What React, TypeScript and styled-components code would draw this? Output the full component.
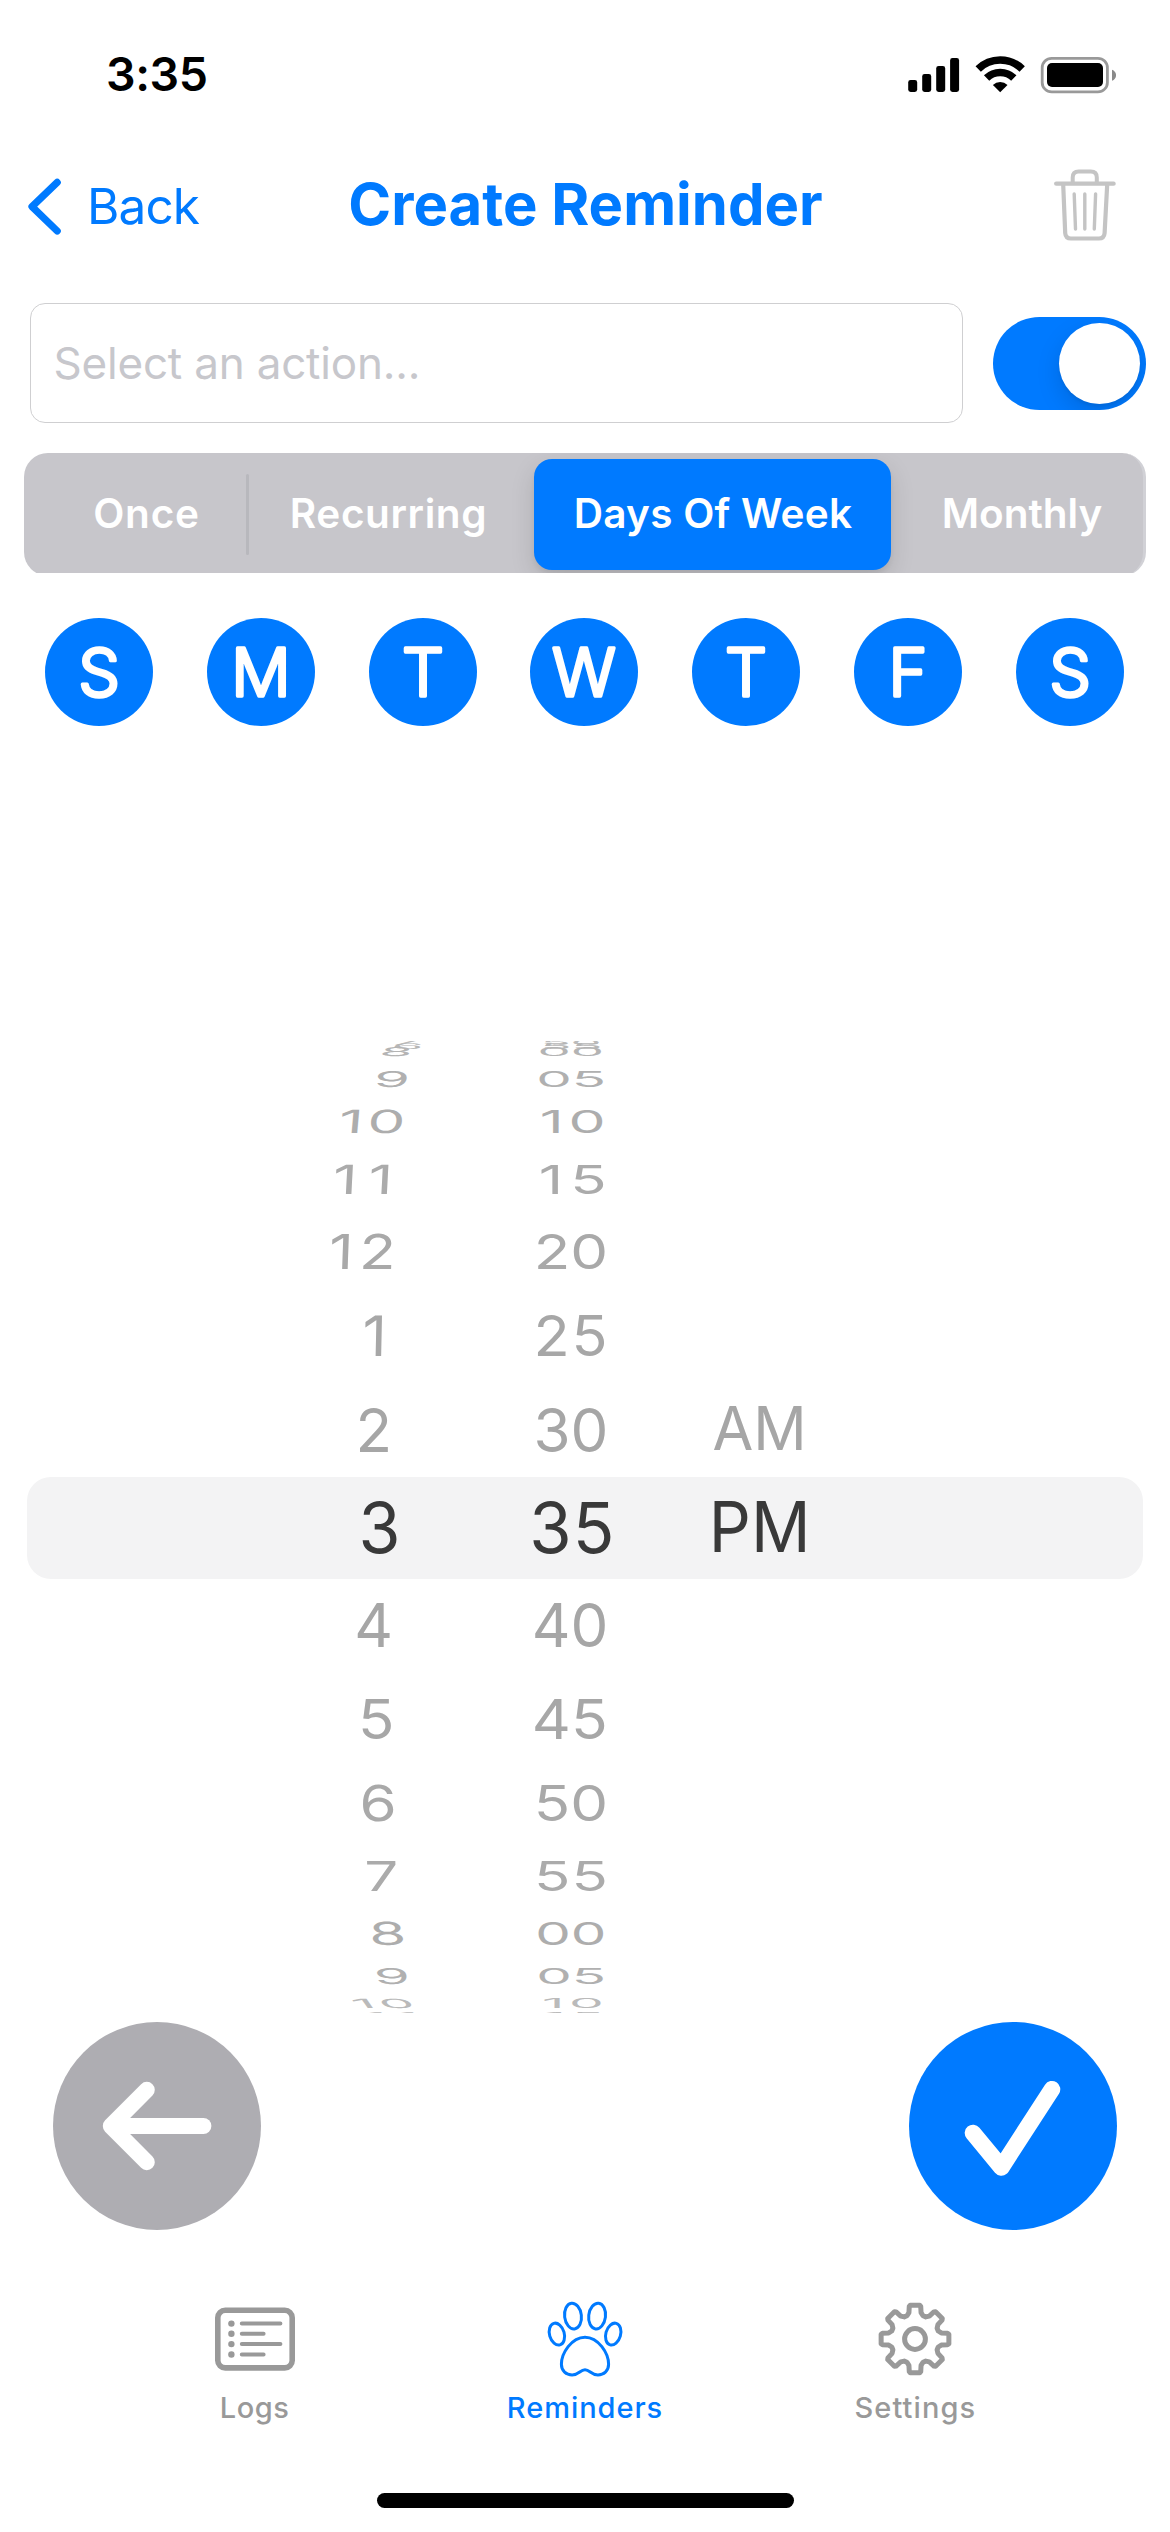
import React from "react";
import styled, { createGlobalStyle } from "styled-components";

const BLUE = "#007aff";
const TAB_GRAY = "#999999";

const GlobalStyle = createGlobalStyle`
  body { margin: 0; background: #ffffff; }
  * { box-sizing: border-box; }
`;

const Screen = styled.main`
  display: flex;
  flex-direction: column;
  width: 1170px;
  height: 2532px;
  overflow: hidden;
  background: #ffffff;
  font-family: Inter, "Liberation Sans", sans-serif;
`;

/* ---------- status bar ---------- */

const StatusBar = styled.header`
  display: flex;
  align-items: center;
  justify-content: space-between;
  height: 149px;
  padding: 0 54px 0 106px;
`;

const Clock = styled.time`
  font-size: 46.5px;
  font-weight: 600;
  line-height: 1;
  letter-spacing: -0.4px;
  color: #000000;
`;

const StatusIcons = styled.div`
  display: flex;
  align-items: center;
`;

const SignalIcon = () => (
  <svg width="209" height="40" viewBox="906 54 209 40">
    <rect x="907.2" y="79" width="9" height="12" rx="2.4" />
    <rect x="921.2" y="73" width="9" height="18" rx="2.4" />
    <rect x="935.2" y="65" width="9" height="26" rx="2.4" />
    <rect x="949.1" y="57" width="9" height="34" rx="2.4" />
    <g fill="none" stroke="#000000" strokeWidth="7.6">
      <path d="M977.2 68 A31.5 31.5 0 0 1 1021.2 68" />
      <path d="M985.6 77 A19.5 19.5 0 0 1 1012.8 77" />
    </g>
    <path d="M999.2 91.3 L991.9 83.9 A10.8 10.8 0 0 1 1006.5 83.9 Z" />
    <rect x="1041.2" y="57.3" width="65.2" height="33.6" rx="9.5" fill="none" stroke="#999999" strokeWidth="2.8" />
    <rect x="1046" y="62" width="56" height="24" rx="5" />
    <path d="M1111 68.7 C1116.4 70.4 1116.4 78 1111 79.7 Z" fill="#8a8a8a" />
  </svg>
);

/* ---------- navigation bar ---------- */

const NavBar = styled.nav`
  display: grid;
  grid-template-columns: 270px 550px 270px;
  align-items: center;
  height: 111px;
  padding: 0 53px 0 27px;
`;

const BackButton = styled.button`
  display: flex;
  align-items: center;
  gap: 24px;
  margin: 4px 0 0;
  padding: 0;
  border: 0;
  background: none;
  font-family: inherit;
  font-size: 49.5px;
  line-height: 1;
  letter-spacing: -0.9px;
  color: ${BLUE};
`;

const Title = styled.h1`
  margin: -2px 0 0 27px;
  font-size: 58px;
  font-weight: 700;
  line-height: 1;
  white-space: nowrap;
  text-align: center;
  color: ${BLUE};
`;

const TrashButton = styled.button`
  display: flex;
  justify-content: flex-end;
  padding: 0;
  border: 0;
  background: none;
`;

const ChevronIcon = () => (
  <svg width="36" height="60" viewBox="27 177 36 60" fill="none" stroke={BLUE} strokeWidth="7.2" strokeLinecap="round" strokeLinejoin="round">
    <path d="M57.2 182.4 L32 206.6 L57.2 231" />
  </svg>
);

const TrashIcon = () => (
  <svg width="64" height="74" viewBox="1054 167.5 64 74" fill="none" stroke="#c4c4c4" strokeLinecap="round" strokeLinejoin="round">
    <path d="M1057.2 183.2 H1114.6" strokeWidth="4.3" />
    <path d="M1073.7 182 V177 Q1073.7 171 1079.7 171 H1091.8 Q1097.8 171 1097.8 177 V182" strokeWidth="4" />
    <path d="M1064.2 184 L1066.2 232.6 Q1066.6 238 1072 238 H1099.8 Q1105.2 238 1105.6 232.6 L1108.2 184" strokeWidth="4.2" />
    <path d="M1075.2 193.5 L1076.5 228.5 M1085.8 193.5 V228.5 M1096.6 193.5 L1095.3 228.5" strokeWidth="3.4" />
  </svg>
);

/* ---------- action field + toggle ---------- */

const ActionRow = styled.section`
  display: flex;
  align-items: center;
  justify-content: space-between;
  height: 120px;
  margin: 43px 24px 0 30px;
`;

const ActionField = styled.div`
  display: flex;
  align-items: center;
  width: 933px;
  height: 120px;
  padding-left: 22.5px;
  border: 1px solid #cfcfd1;
  border-radius: 15px;
  font-size: 44px;
  line-height: 1;
  letter-spacing: -0.2px;
  color: #c7c7cc;
`;

const Toggle = styled.div`
  display: flex;
  align-items: center;
  justify-content: flex-end;
  width: 153px;
  height: 93px;
  padding-right: 6px;
  overflow: hidden;
  border-radius: 47px;
  background: ${BLUE};
`;

const Knob = styled.span`
  width: 81px;
  height: 81px;
  border-radius: 50%;
  background: #ffffff;
  box-shadow: 0 9px 24px rgba(0, 0, 0, 0.13), 0 3px 3px rgba(0, 0, 0, 0.05);
`;

/* ---------- segmented control ---------- */

const SegmentClip = styled.section`
  height: 120px;
  margin: 30px 24px 0;
  overflow: hidden;
`;

const Segments = styled.div`
  display: flex;
  align-items: stretch;
  height: 123px;
  padding: 6px 0;
  overflow: hidden;
  border-radius: 24px;
  border-right: 3px solid #d1d1d6;
  background: #c7c6cb;
`;

const Segment = styled.button<{ $width: number; $nudge?: number; $track?: number; $selected?: boolean }>`
  display: flex;
  flex: none;
  align-items: center;
  justify-content: center;
  width: ${(p) => p.$width}px;
  padding: 0 ${(p) => Math.max(0, -(p.$nudge ?? 0))}px 0 ${(p) => Math.max(0, p.$nudge ?? 0)}px;
  border: 0;
  border-radius: 18px;
  background: ${(p) => (p.$selected ? BLUE : "transparent")};
  box-shadow: ${(p) => (p.$selected ? "0 9px 24px rgba(0, 0, 0, 0.13), 0 4px 4px rgba(0, 0, 0, 0.05)" : "none")};
  font-family: inherit;
  font-size: 40.5px;
  font-weight: 600;
  line-height: 1;
  letter-spacing: ${(p) => p.$track ?? 0}px;
  white-space: nowrap;
  color: #ffffff;
`;

const SegmentDivider = styled.span`
  flex: none;
  width: 3px;
  margin: 15px 0;
  border-radius: 2px;
  background: #b8b8bd;
`;

/* ---------- weekday circles ---------- */

const Weekdays = styled.section`
  display: flex;
  justify-content: space-between;
  height: 108px;
  margin: 45px 46px 0 45px;
`;

const DayBadge = styled.svg`
  width: 108px;
  height: 108px;
  border-radius: 50%;
  background: ${BLUE};
`;

const DayLetter = styled.text`
  fill: #ffffff;
  stroke: #ffffff;
  stroke-width: 3.4px;
  stroke-linejoin: round;
  stroke-linecap: round;
  font-family: Inter, sans-serif;
  font-size: 66px;
  font-weight: 300;
  text-anchor: middle;
`;

const Weekday = ({ letter }: { letter: string }) => (
  <DayBadge viewBox="0 0 108 108">
    <DayLetter x="54" y="77.6">{letter}</DayLetter>
  </DayBadge>
);

/* ---------- time wheel ---------- */

const Picker = styled.section`
  position: relative;
  display: grid;
  grid-template-columns: 190px 194px 187px;
  justify-content: start;
  height: 1287px;
  padding: 315px 0 0 284px;
  overflow: hidden;
`;

const SelectionBand = styled.div`
  position: absolute;
  top: 751px;
  left: 27px;
  right: 27px;
  height: 102px;
  border-radius: 24px;
  background: #f3f3f4;
`;

const WheelColumn = styled.div`
  position: relative;
  display: flex;
  flex-direction: column;
  align-items: center;
  height: 972px;
  overflow: hidden;
`;

type Cell = {
  text: string;
  gap: number;
  height: number;
  dx?: number;
  sx?: number;
  skew?: number;
  track?: number;
  shade?: string;
  selected?: boolean;
};

const WheelCell = styled.div<{ $gap: number; $height: number }>`
  display: flex;
  flex: none;
  align-items: center;
  justify-content: center;
  height: ${(p) => p.$height}px;
  margin-top: ${(p) => p.$gap}px;
`;

const WheelText = styled.span<{ $cell: Cell }>`
  flex: none;
  font-size: ${(p) => (p.$cell.selected ? 68 : 60)}px;
  line-height: 1;
  white-space: nowrap;
  letter-spacing: ${(p) => p.$cell.track ?? 0}px;
  margin-right: ${(p) => -(p.$cell.track ?? 0)}px;
  color: ${(p) => (p.$cell.selected ? "#393939" : p.$cell.shade ?? "#a6a6a6")};
  transform: translate(${(p) => p.$cell.dx ?? 0}px, -1px)
    skewX(${(p) => p.$cell.skew ?? 0}deg)
    scale(${(p) => p.$cell.sx ?? 1}, ${(p) => p.$cell.height / (p.$cell.selected ? 51.2 : 45.2)});
`;

const hours: Cell[] = [
  { text: "7", gap: 0.5, height: 5, dx: 26, sx: 0.9, shade: "#bbbbbb" },
  { text: "6", gap: -2.5, height: 6, dx: 29, sx: 0.85, skew: -20, shade: "#b6b6b6" },
  { text: "8", gap: -1.2, height: 9.2, dx: 18, sx: 0.88, skew: -20, shade: "#b4b4b4" },
  { text: "9", gap: 14, height: 16.3, dx: 13.5, sx: 0.96, skew: -7, shade: "#b0b0b0" },
  { text: "10", gap: 22, height: 24, dx: -7, track: 4, skew: -5, shade: "#adadad" },
  { text: "11", gap: 31, height: 30.3, dx: -16, track: 11, skew: -3, shade: "#ababab" },
  { text: "12", gap: 38.7, height: 36.3, dx: -17, track: 6, skew: -2, shade: "#a9a9a9" },
  { text: "1", gap: 45.4, height: 42, dx: -4.5, skew: -1.2, shade: "#a7a7a7" },
  { text: "2", gap: 50, height: 45.3, dx: -5.3 },
  { text: "3", gap: 48.7, height: 52.3, dx: 0.5, selected: true },
  { text: "4", gap: 49.3, height: 45.7, dx: -5.3 },
  { text: "5", gap: 49.7, height: 41.6, dx: -2.7, shade: "#a7a7a7" },
  { text: "6", gap: 44.7, height: 37.3, dx: -0.5, skew: 1, shade: "#a9a9a9" },
  { text: "7", gap: 38.7, height: 31, dx: 2.6, skew: 2, shade: "#ababab" },
  { text: "8", gap: 30.3, height: 24, dx: 8.9, skew: 4, shade: "#adadad" },
  { text: "9", gap: 22.4, height: 16.3, dx: 13.4, sx: 0.96, skew: 8, shade: "#b0b0b0" },
  { text: "10", gap: 13.7, height: 9.5, dx: 4, sx: 0.92, track: 5, skew: 35, shade: "#bababa" },
  { text: "11", gap: 5, height: 7, dx: 14, sx: 0.9, track: 11, skew: 40, shade: "#bbbbbb" },
];

const minutes: Cell[] = [
  { text: "50", gap: 0.5, height: 5, sx: 0.82, shade: "#bbbbbb" },
  { text: "55", gap: -2.5, height: 6, sx: 0.85, shade: "#b6b6b6" },
  { text: "00", gap: -1.2, height: 9.2, sx: 0.88, shade: "#b4b4b4" },
  { text: "05", gap: 14, height: 16.3, sx: 0.94, shade: "#b0b0b0" },
  { text: "10", gap: 22, height: 24, dx: 2, sx: 0.98, track: 5, shade: "#adadad" },
  { text: "15", gap: 31, height: 30.3, dx: 1.8, track: 7, shade: "#ababab" },
  { text: "20", gap: 38.7, height: 36.3, shade: "#a9a9a9" },
  { text: "25", gap: 45.4, height: 42, sx: 0.99, track: 2, shade: "#a7a7a7" },
  { text: "30", gap: 50, height: 45.3 },
  { text: "35", gap: 48.7, height: 52.3, dx: 0.7, sx: 1.01, track: 1, selected: true },
  { text: "40", gap: 49.3, height: 45.7, dx: -1 },
  { text: "45", gap: 49.7, height: 41.6, dx: -0.8, sx: 1.01, shade: "#a7a7a7" },
  { text: "50", gap: 44.7, height: 37.3, shade: "#a9a9a9" },
  { text: "55", gap: 38.7, height: 31, track: 1, shade: "#ababab" },
  { text: "00", gap: 30.3, height: 24, sx: 0.94, shade: "#adadad" },
  { text: "05", gap: 22.4, height: 16.3, sx: 0.94, shade: "#b0b0b0" },
  { text: "10", gap: 13.7, height: 9.5, dx: 2, sx: 0.92, track: 5, shade: "#bababa" },
  { text: "15", gap: 5, height: 7, dx: 2, sx: 0.9, track: 6, shade: "#bbbbbb" },
];

const periods: Cell[] = [
  { text: "AM", gap: 365.7, height: 45.3, dx: -2.2, sx: 0.985 },
  { text: "PM", gap: 48.7, height: 52.3, dx: -1.8, sx: 0.97, selected: true },
];

const Wheel = ({ cells }: { cells: Cell[] }) => (
  <WheelColumn>
    {cells.map((cell, i) => (
      <WheelCell key={i} $gap={cell.gap} $height={cell.height}>
        <WheelText $cell={cell}>{cell.text}</WheelText>
      </WheelCell>
    ))}
  </WheelColumn>
);

/* ---------- round action buttons ---------- */

const ActionButtons = styled.section`
  display: flex;
  justify-content: space-between;
  height: 208px;
  margin: 9px 53px 0;
`;

const RoundButton = styled.button<{ $color: string }>`
  width: 208px;
  height: 208px;
  padding: 0;
  border: 0;
  border-radius: 50%;
  background: ${(p) => p.$color};
`;

const ArrowIcon = () => (
  <svg width="208" height="208" viewBox="53 2022 208 208" fill="none" stroke="#ffffff" strokeWidth="16" strokeLinecap="round" strokeLinejoin="round">
    <path d="M112 2126 H203.4" />
    <path d="M146.8 2089.8 L110.8 2126 L146.8 2162.2" />
  </svg>
);

const CheckIcon = () => (
  <svg width="208" height="208" viewBox="909 2022 208 208" fill="none" stroke="#ffffff" strokeWidth="16.6" strokeLinecap="round" strokeLinejoin="round">
    <path d="M973 2133 L1001.4 2167.4 L1052 2089.2" />
  </svg>
);

/* ---------- tab bar ---------- */

const TabBar = styled.nav`
  display: flex;
  justify-content: center;
  height: 263px;
  padding-top: 69px;
`;

const Tab = styled.a<{ $active?: boolean; $track?: number }>`
  display: flex;
  flex-direction: column;
  align-items: center;
  gap: 14px;
  width: 330.4px;
  color: ${(p) => (p.$active ? BLUE : TAB_GRAY)};
  font-size: 29px;
  font-weight: 500;
  line-height: 1;
  letter-spacing: ${(p) => p.$track ?? 0}px;
`;

const LogsIcon = () => (
  <svg width="84" height="80" viewBox="212 2299.5 84 80" fill="none" stroke="currentColor" strokeLinecap="round">
    <rect x="216.8" y="2310.8" width="74.4" height="57.6" rx="7.5" strokeWidth="5.6" />
    <path d="M240.8 2324.1 H279.4 M240.8 2334.3 H262.6 M240.8 2344.6 H279.4 M240.8 2355 H262.6" strokeWidth="4" />
    <g fill="currentColor" stroke="none">
      <circle cx="230.4" cy="2324.1" r="3.2" />
      <circle cx="230.4" cy="2334.3" r="3.2" />
      <circle cx="230.4" cy="2344.6" r="3.2" />
      <circle cx="230.4" cy="2355" r="3.2" />
    </g>
  </svg>
);

const PawIcon = () => (
  <svg width="80" height="80" viewBox="544.5 2299.5 80 80" fill="none" stroke="currentColor" strokeWidth="3" strokeLinejoin="round">
    <ellipse cx="572.5" cy="2316.6" rx="8.4" ry="12.9" transform="rotate(-7 572.5 2316.6)" />
    <ellipse cx="596.6" cy="2316.6" rx="8.4" ry="12.9" transform="rotate(7 596.6 2316.6)" />
    <ellipse cx="556.4" cy="2334.6" rx="7.4" ry="11.2" transform="rotate(-16 556.4 2334.6)" />
    <ellipse cx="612.7" cy="2334.6" rx="7.4" ry="11.2" transform="rotate(16 612.7 2334.6)" />
    <path d="M584.5 2337.7 C571 2337.7 560.9 2354 560.9 2364.8 C560.9 2371.6 565.8 2375.4 571.6 2375.4 C578.5 2375.4 579.6 2370.2 584.5 2370.2 C589.4 2370.2 590.5 2375.4 597.4 2375.4 C603.2 2375.4 608.1 2371.6 608.1 2364.8 C608.1 2354 598 2337.7 584.5 2337.7 Z" />
  </svg>
);

const gearOutline = Array.from({ length: 8 }, (_, i) => {
  const at = (deg: number, r: number) => {
    const a = ((i * 45 + deg - 90) * Math.PI) / 180;
    return `${(40 + r * Math.cos(a)).toFixed(2)} ${(40 + r * Math.sin(a)).toFixed(2)}`;
  };
  return `${at(-19, 24.6)} L${at(-13, 27)} L${at(-10, 33)} L${at(-8, 34.2)} L${at(8, 34.2)} L${at(10, 33)} L${at(13, 27)} L${at(19, 24.6)}`;
}).join(" L");

const GearIcon = () => (
  <svg width="80" height="80" viewBox="0 0 80 80" fill="none" stroke="currentColor" strokeWidth="5" strokeLinejoin="round">
    <path d={`M${gearOutline} Z`} />
    <circle cx="40" cy="40" r="10.4" />
  </svg>
);

const HomeIndicator = styled.div`
  align-self: center;
  flex: none;
  width: 417px;
  height: 15px;
  border-radius: 8px;
  background: #000000;
`;

export default function App() {
  return (
    <>
      <GlobalStyle />
      <Screen>
        <StatusBar>
          <Clock>3:35</Clock>
          <StatusIcons>
            <SignalIcon />
          </StatusIcons>
        </StatusBar>

        <NavBar>
          <BackButton>
            <ChevronIcon />
            Back
          </BackButton>
          <Title>Create Reminder</Title>
          <TrashButton aria-label="Delete">
            <TrashIcon />
          </TrashButton>
        </NavBar>

        <ActionRow>
          <ActionField>Select an action...</ActionField>
          <Toggle>
            <Knob />
          </Toggle>
        </ActionRow>

        <SegmentClip>
          <Segments>
            <Segment $width={222} $nudge={23} $track={0.8}>Once</Segment>
            <SegmentDivider />
            <Segment $width={285} $nudge={-6} $track={0.6}>Recurring</Segment>
            <Segment $width={357} $nudge={1} $track={0.25} $selected>Days Of Week</Segment>
            <Segment $width={252} $nudge={10}>Monthly</Segment>
          </Segments>
        </SegmentClip>

        <Weekdays>
          {["S", "M", "T", "W", "T", "F", "S"].map((d, i) => (
            <Weekday key={i} letter={d} />
          ))}
        </Weekdays>

        <Picker>
          <SelectionBand />
          <Wheel cells={hours} />
          <Wheel cells={minutes} />
          <Wheel cells={periods} />
        </Picker>

        <ActionButtons>
          <RoundButton $color="#aeadb2" aria-label="Previous">
            <ArrowIcon />
          </RoundButton>
          <RoundButton $color={BLUE} aria-label="Save">
            <CheckIcon />
          </RoundButton>
        </ActionButtons>

        <TabBar>
          <Tab $track={0.6}>
            <LogsIcon />
            Logs
          </Tab>
          <Tab $active $track={0.95}>
            <PawIcon />
            Reminders
          </Tab>
          <Tab $track={1.1}>
            <GearIcon />
            Settings
          </Tab>
        </TabBar>
        <HomeIndicator />
      </Screen>
    </>
  );
}
